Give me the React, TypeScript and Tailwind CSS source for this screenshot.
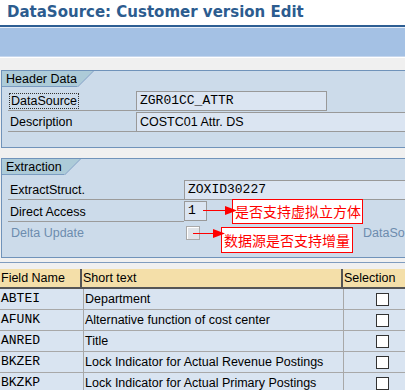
import React from "react";

const sans = "font-['Liberation_Sans',Arial,sans-serif]";
const mono = "font-['Liberation_Mono','Courier_New',monospace]";

function Tab({ label, w }: { label: string; w: number }) {
  return (
    <div className="flex h-[16px]">
      <div
        className="bg-[#adcbd8] text-[12.5px] leading-[16px] pl-[4px] text-black border-b border-[#7b9cc1] whitespace-nowrap"
        style={{ width: w }}
      >
        {label}
      </div>
      <svg width="17" height="16" viewBox="0 0 17 16" className="block">
        <polygon points="0,0 16,0 0,16" fill="#adcbd8" />
        <line x1="16.5" y1="0" x2="0" y2="16.5" stroke="#7b9cc1" strokeWidth="1" />
      </svg>
    </div>
  );
}

function Row({
  label,
  labelW,
  children,
  focus,
  h = 21,
}: {
  label: string;
  labelW: number;
  children?: React.ReactNode;
  focus?: boolean;
  h?: number;
}) {
  return (
    <div className="flex" style={{ height: h }}>
      <div
        className="ml-[6px] border-b border-[#9b9b9b] flex items-end pb-[1px] shrink-0"
        style={{ width: labelW }}
      >
        {focus ? (
          <span className="ml-[1px] px-[1px] border border-dotted border-[#333] text-[12.5px] leading-[14px] text-black whitespace-nowrap">
            {label}
          </span>
        ) : (
          <span className="ml-[2px] text-[12.5px] leading-[16px] text-black whitespace-nowrap">{label}</span>
        )}
      </div>
      {children}
    </div>
  );
}

function Input({ text, w, monoFont }: { text: string; w: number; monoFont?: boolean }) {
  return (
    <div
      className={`h-[20px] mt-[1px] bg-[#dbe5f2] border border-[#999] pl-[3px] leading-[18px] shrink-0 whitespace-nowrap text-black ${
        monoFont ? `${mono} text-[13px]` : `${sans} text-[12.5px]`
      }`}
      style={{ width: w }}
    >
      {text}
    </div>
  );
}

const rows = [
  ["ABTEI", "Department"],
  ["AFUNK", "Alternative function of cost center"],
  ["ANRED", "Title"],
  ["BKZER", "Lock Indicator for Actual Revenue Postings"],
  ["BKZKP", "Lock Indicator for Actual Primary Postings"],
];

export default function App() {
  return (
    <div className={`w-[405px] h-[390px] overflow-hidden bg-[#f0f0f0] relative ${sans}`}>
      {/* Title */}
      <div className="h-[25px] bg-white pl-[7px] flex items-center">
        <span className="font-['DejaVu_Sans',Verdana,sans-serif] font-bold text-[15px] text-[#2c5c8f] whitespace-nowrap">
          DataSource: Customer version Edit
        </span>
      </div>
      <div className="h-[2px] bg-[#2d5e93]" />
      <div className="h-[1px] bg-[#e8eef8]" />
      <div className="h-[28px] bg-[#a4c1e4]" />
      <div className="h-[1px] bg-[#c6d7ee]" />
      <div className="h-[1px] bg-white" />

      {/* Header Data */}
      <div className="mt-[12px] ml-[1px] w-[430px] h-[78px] border border-[#7093ba] bg-[#ccdbea]">
        <Tab label="Header Data" w={75} />
        <div className="mt-[3px]">
          <Row label="DataSource" labelW={128} focus>
            <Input text="ZGR01CC_ATTR" w={191} monoFont />
          </Row>
          <Row label="Description" labelW={128}>
            <Input text="COSTC01 Attr. DS" w={300} />
          </Row>
        </div>
      </div>

      {/* Extraction */}
      <div className="mt-[10px] ml-[1px] w-[430px] h-[100px] border border-[#7093ba] bg-[#ccdbea]">
        <Tab label="Extraction" w={62} />
        <div className="mt-[4px]">
          <Row label="ExtractStruct." labelW={176}>
            <Input text="ZOXID30227" w={260} monoFont />
          </Row>
          <Row label="Direct Access" labelW={176} h={22}>
            <Input text="1" w={23} monoFont />
          </Row>
          <div className="flex h-[22px] items-center">
            <span className="ml-[9px] w-[175px] text-[12.5px] text-[#6d8cae] whitespace-nowrap">Delta Update</span>
            <div className="w-[14px] h-[14px] border border-[#a9a9a9] bg-[#dfe3e8] shadow-[inset_1px_1px_0_#fff] shrink-0" />
            <span className="ml-[163px] text-[12.5px] text-[#6d8cae] whitespace-nowrap">DataSource</span>
          </div>
        </div>
      </div>

      {/* Table */}
      <div className="mt-[4px] h-[1px] bg-[#7f9cbf]" />
      <div className="h-[6px]" />
      <div className="flex h-[20px] bg-[#f4dfa9] border-b-2 border-[#555] text-[12.5px] leading-[18px] text-black">
        <div className="w-[82px] pl-[1px] border-r-2 border-[#555]">Field Name</div>
        <div className="w-[261px] pl-[1px] border-r-2 border-[#555]">Short text</div>
        <div className="flex-1 pl-[1px]">Selection</div>
      </div>
      {rows.map(([f, t]) => (
        <div key={f} className="flex h-[21px] bg-[#d9e4f1] border-b border-[#a8a8a8]">
          <div className={`w-[84px] pl-[1px] border-r border-[#a8a8a8] ${mono} text-[13px] leading-[20px] text-black`}>
            {f}
          </div>
          <div className="w-[260px] pl-[1px] border-r border-[#a8a8a8] text-[12.5px] leading-[20px] text-black whitespace-nowrap">
            {t}
          </div>
          <div className="flex-1 flex items-center">
            <div className="ml-[32px] w-[13px] h-[13px] bg-white border border-[#333]" />
          </div>
        </div>
      ))}

      {/* Annotations */}
      <div className="absolute left-[232px] top-[199px] w-[131px] h-[25px] bg-white border border-[#ff0000] text-[#ff0000] font-['Noto_Sans_CJK_SC',sans-serif] text-[14px] leading-[23px] pl-[2px] whitespace-nowrap">
        是否支持虚拟立方体
      </div>
      <div className="absolute left-[221px] top-[227px] w-[132px] h-[26px] bg-white border border-[#ff0000] text-[#ff0000] font-['Noto_Sans_CJK_SC',sans-serif] text-[14px] leading-[24px] pl-[2px] whitespace-nowrap">
        数据源是否支持增量
      </div>
      <svg className="absolute left-0 top-0" width="405" height="390" viewBox="0 0 405 390">
        <line x1="203" y1="210.5" x2="226" y2="210.5" stroke="#ff0000" strokeWidth="1" />
        <polygon points="225,206 237,210.5 225,215" fill="#ff0000" />
        <line x1="193" y1="233.5" x2="214" y2="233.5" stroke="#ff0000" strokeWidth="1" />
        <polygon points="213,229 225,233.5 213,238" fill="#ff0000" />
      </svg>
    </div>
  );
}
